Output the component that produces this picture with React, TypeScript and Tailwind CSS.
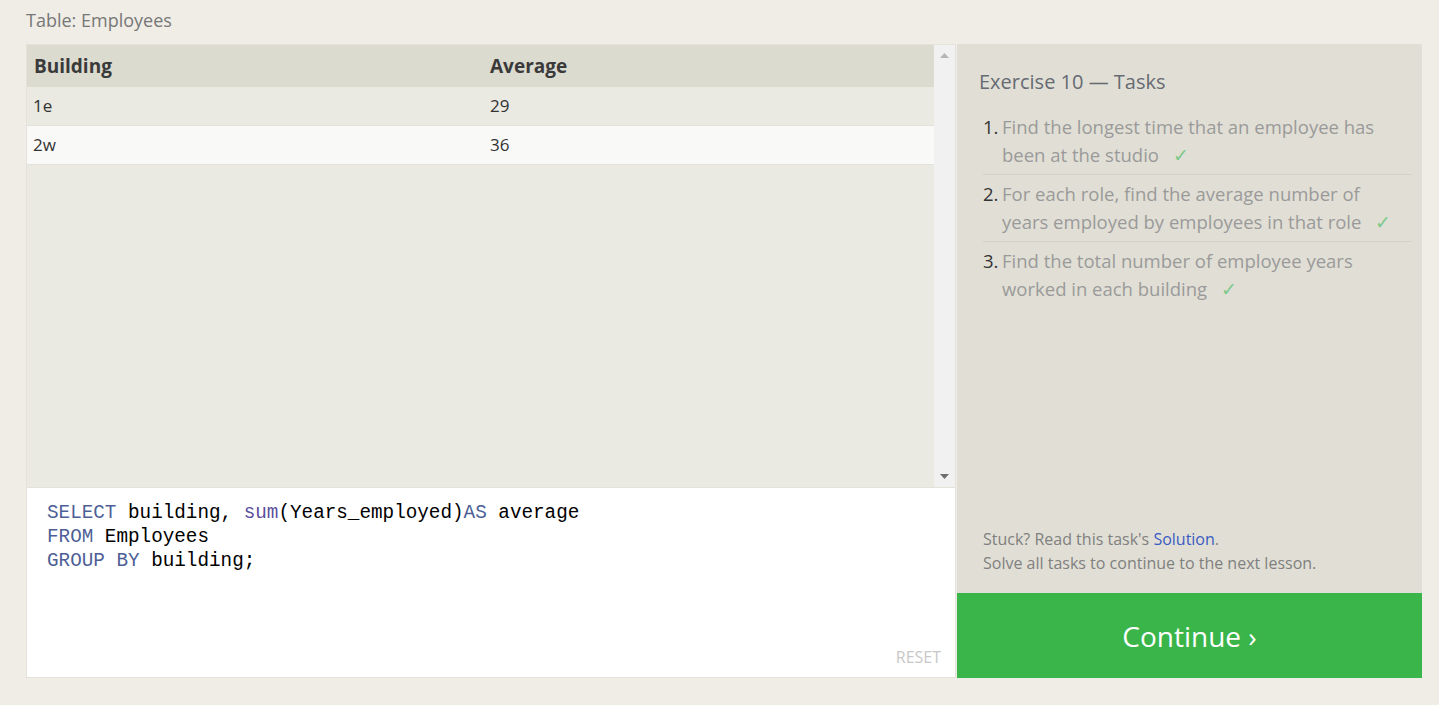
export default function App() {
  const rows = [
    { building: "1e", average: "29" },
    { building: "2w", average: "36" },
  ];

  const tasks = [
    "Find the longest time that an employee has been at the studio",
    "For each role, find the average number of years employed by employees in that role",
    "Find the total number of employee years worked in each building",
  ];

  return (
    <div className="h-[705px] bg-[#efede6] px-[26px] pt-[8px] font-['Open_Sans',sans-serif]">
      <div className="h-[36px] text-[18px] leading-[24px] text-[#777]">Table: Employees</div>
      <div className="flex w-[1396px]">
        {/* left: results + editor */}
        <div className="w-[930px]">
          <div className="flex h-[443px] border border-[#e4e2da] border-b-0">
            <div className="flex-1 bg-[#eae9e2]">
              <div className="flex h-[42px] items-center bg-[#dcdbd0] text-[19px] font-bold text-[#3a3a3a]">
                <div className="w-[463px] pl-[7px]">Building</div>
                <div className="flex-1">Average</div>
              </div>
              {rows.map((r, i) => (
                <div
                  key={r.building}
                  className={`flex h-[39px] items-center border-b border-[#e3e2dc] text-[17px] text-[#333] ${
                    i % 2 === 0 ? "bg-[#eae9e2]" : "bg-[#f9f9f8]"
                  }`}
                >
                  <div className="w-[463px] pl-[6px]">{r.building}</div>
                  <div className="flex-1">{r.average}</div>
                </div>
              ))}
            </div>
            <div className="flex w-[21px] flex-col items-center justify-between bg-[#f1f1f1] py-[8px]">
              <svg width="9" height="5" viewBox="0 0 9 5">
                <path d="M0 5 L4.5 0 L9 5 Z" fill="#b5b5b5" />
              </svg>
              <svg width="9" height="5" viewBox="0 0 9 5">
                <path d="M0 0 L4.5 5 L9 0 Z" fill="#6e6e6e" />
              </svg>
            </div>
          </div>
          <div className="relative h-[191px] border border-[#e4e2da] bg-white px-[20px] pt-[13px] font-['Liberation_Mono',monospace] text-[19.3px] leading-[24px] text-black">
            <div>
              <span className="text-[#4e5f97]">SELECT</span> building, <span className="text-[#5a4f9c]">sum</span>(Years_employed)<span className="text-[#4e5f97]">AS</span> average
            </div>
            <div>
              <span className="text-[#4e5f97]">FROM</span> Employees
            </div>
            <div>
              <span className="text-[#4e5f97]">GROUP BY</span> building;
            </div>
            <div className="absolute bottom-[10px] right-[14px] font-['Open_Sans',sans-serif] text-[16px] leading-[20px] text-[#c8c8c8]">
              RESET
            </div>
          </div>
        </div>

        {/* right: tasks */}
        <div className="ml-px flex w-[465px] flex-col">
          <div className="flex h-[549px] flex-col justify-between bg-[#e1dfd5] pb-[18px] pl-[22px] pr-[10px] pt-[24px]">
            <div>
              <div className="text-[20px] leading-[28px] text-[#666a73]">Exercise 10 — Tasks</div>
              <ol className="mt-[12px] pl-[4px]">
                {tasks.map((t, i) => (
                  <li
                    key={i}
                    className={`flex py-[5px] text-[18.5px] leading-[28px] ${
                      i < tasks.length - 1 ? "border-b border-[#d4d2c9]" : ""
                    }`}
                  >
                    <span className="w-[19px] shrink-0 text-[#333]">{i + 1}.</span>
                    <p className="pr-[12px] text-[#9a9a9a] after:ml-[14px] after:text-[#7cc98a] after:content-['✓']">
                      {t}
                    </p>
                  </li>
                ))}
              </ol>
            </div>
            <div className="pl-[4px] text-[16px] leading-[24px] text-[#808080]">
              <div>
                Stuck? Read this task's <span className="text-[#3b5bc4]">Solution</span>.
              </div>
              <div>Solve all tasks to continue to the next lesson.</div>
            </div>
          </div>
          <div className="flex h-[85px] items-center justify-center bg-[#39b54a] text-[28px] text-white">
            Continue ›
          </div>
        </div>
      </div>
    </div>
  );
}
